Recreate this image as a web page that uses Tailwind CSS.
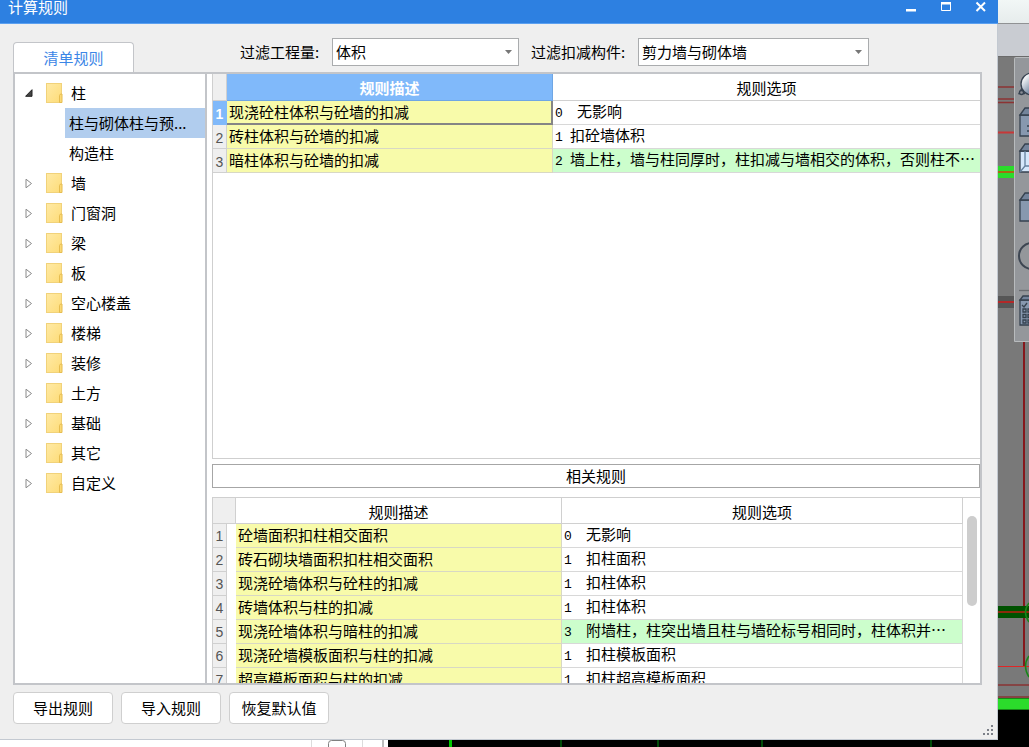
<!DOCTYPE html>
<html lang="zh-CN">
<head>
<meta charset="utf-8">
<meta name="viewport" content="width=device-width, initial-scale=1">
<title>计算规则</title>
<script src="https://cdn.jsdelivr.net/npm/@tailwindcss/browser@4"></script>
</head>
<body class="h-screen overflow-hidden grid grid-cols-[minmax(0,1fr)_31px] grid-rows-[minmax(0,1fr)_7px] bg-black text-[15px] leading-5 text-black font-['Noto_Sans_CJK_SC',sans-serif]">

<svg width="0" height="0" class="absolute" aria-hidden="true">
  <defs>
    <linearGradient id="fold" x1="0" y1="0" x2="1" y2="1"><stop offset="0" stop-color="#ffeaa6"/><stop offset="1" stop-color="#fddc78"/></linearGradient>
    <symbol id="folder" viewBox="0 0 17 21">
      <rect x="0.5" y="0.5" width="15" height="19" fill="url(#fold)" stroke="#f1d27a"/>
      <path d="M13.500 19.500v-7l1-1.500h1.500v8.500z" fill="#fbd976" stroke="#e6bd50"/>
    </symbol>
    <symbol id="closed" viewBox="0 0 8 11"><path d="M1 1.200v8.600l5.500-4.300z" fill="#fff" stroke="#8a8a8a" stroke-width="1"/></symbol>
    <symbol id="open" viewBox="0 0 8 8"><path d="M7 0.700v6.600h-6.400z" fill="#444" stroke="#222" stroke-width="1"/></symbol>
    <linearGradient id="ball" x1="0" y1="0" x2="1" y2="1"><stop offset="0.150" stop-color="#ffffff"/><stop offset="0.600" stop-color="#8496ad"/></linearGradient>
    <linearGradient id="ribbon" x1="0" y1="0" x2="0" y2="1"><stop offset="0" stop-color="#f2f7f6"/><stop offset="1" stop-color="#e6ecec"/></linearGradient>
  </defs>
</svg>

<!-- dialog window -->
<main class="flex flex-col min-h-0 bg-[#efefef] border-r border-b border-[#c3c9d1]">
  <header class="flex justify-between items-start h-6 shrink-0 -mr-px bg-[#2d80e1] border-b border-[#5ba0f0] text-white">
    <h1 class="pl-2 leading-[14px]">计算规则</h1>
    <div class="flex gap-[19px] pr-[7px]">
      <button aria-label="最小化" class="w-4 h-4"><svg viewBox="0 0 16 16" width="16" height="16"><rect x="1" y="9" width="10" height="2.500" fill="#fff"/></svg></button>
      <button aria-label="最大化" class="w-4 h-4"><svg viewBox="0 0 16 16" width="16" height="16"><path d="M1.500 3.500h9v7h-9z" fill="none" stroke="#fff"/><rect x="1" y="2" width="10" height="2.500" fill="#fff"/></svg></button>
      <button aria-label="关闭" class="w-4 h-4"><svg viewBox="0 0 16 16" width="16" height="16"><path d="M1.500 2.500l8.500 8.500M10 2.500L1.500 11" stroke="#fff" stroke-width="2"/></svg></button>
    </div>
  </header>

  <div class="flex h-12 shrink-0 pl-[13px]">
    <button class="self-end w-[121px] h-[30px] bg-white border border-b-0 border-[#c3c5c9] rounded-t-[4px] text-[#3c86e6] pt-px">清单规则</button>
    <div class="flex items-center h-7 mt-[14px] ml-[106px]">
      <label for="qty" class="w-[92px]">过滤工程量:</label>
      <span class="relative block w-[187px] h-7">
        <select id="qty" class="appearance-none w-full h-full pl-[3px] bg-white border border-[#aaacae]"><option>体积</option></select>
        <svg class="absolute right-[7px] top-3 pointer-events-none" width="7" height="4"><path d="M0 0h7L3.500 4z" fill="#777"/></svg>
      </span>
      <label for="part" class="w-[107px] ml-3">过滤扣减构件:</label>
      <span class="relative block w-[231px] h-7">
        <select id="part" class="appearance-none w-full h-full pl-[3px] bg-white border border-[#aaacae]"><option>剪力墙与砌体墙</option></select>
        <svg class="absolute right-[7px] top-3 pointer-events-none" width="7" height="4"><path d="M0 0h7L3.500 4z" fill="#777"/></svg>
      </span>
    </div>
  </div>

  <section class="flex flex-1 min-h-0 ml-[13px] mr-[15px] bg-white border-2 border-[#c3c5c9]">
    <nav class="w-[192px] shrink-0 border-r-2 border-[#c3c5c9] pt-1">
      <ul id="tree"></ul>
    </nav>
    <div class="flex flex-col flex-1 min-w-0 ml-[5px]">
      <div class="flex-[386_1_0] min-h-0 overflow-hidden border-l border-b border-[#cfcfcf]">
        <table class="w-full table-fixed border-separate border-spacing-0">
          <colgroup><col class="w-[14px]"><col class="w-[326px]"><col></colgroup>
          <thead><tr class="h-[27px]">
            <th class="bg-[#efefef] border-b border-r border-[#d0d0d0]"></th>
            <th class="p-0 pt-[2px] bg-[#80b9fa] border-b border-r border-[#6fa6e4] text-white font-bold">规则描述</th>
            <th class="p-0 pt-[2px] border-b border-[#d0d0d0] font-normal">规则选项</th>
          </tr></thead>
          <tbody id="rules"></tbody>
        </table>
      </div>
      <h2 class="h-6 shrink-0 mt-[5px] mb-[9px] border border-[#a6a6a6] text-center leading-[22px]">相关规则</h2>
      <div class="flex flex-[186_1_0] min-h-0 overflow-hidden border-l border-t border-[#cfcfcf]">
        <div class="flex-1 min-w-0 h-full overflow-hidden">
          <table class="w-full table-fixed border-separate border-spacing-0">
            <colgroup><col class="w-[14px]"><col class="w-[9px]"><col class="w-[326px]"><col></colgroup>
            <thead><tr class="h-[26px]">
              <th colspan="2" class="bg-[#efefef] border-b border-r border-[#d0d0d0]"></th>
              <th class="p-0 pt-[3px] border-b border-r border-[#d0d0d0] font-normal">规则描述</th>
              <th class="p-0 pt-[3px] border-b border-r border-[#d0d0d0] font-normal">规则选项</th>
            </tr></thead>
            <tbody id="related"></tbody>
          </table>
        </div>
        <div class="w-[17px] shrink-0 pl-1 pt-[18px]"><div class="w-[10px] h-[90px] rounded-full bg-[#cdcdcd]"></div></div>
      </div>
    </div>
  </section>

  <footer class="flex shrink-0 h-[54px] pl-[13px] pt-[7px] pr-1 gap-2">
    <button class="w-[100px] h-8 bg-white border border-[#cfcfcf] rounded-[4px]">导出规则</button>
    <button class="w-[100px] h-8 bg-white border border-[#cfcfcf] rounded-[4px]">导入规则</button>
    <button class="w-[100px] h-8 bg-white border border-[#cfcfcf] rounded-[4px]">恢复默认值</button>
    <svg class="ml-auto mb-1 self-end" width="10" height="10" fill="#7c8088"><path d="M8 0h2v2h-2zM8 4h2v2h-2zM4 4h2v2h-2zM8 8h2v2h-2zM4 8h2v2h-2zM0 8h2v2h-2z"/></svg>
  </footer>
</main>

<!-- drawing area and tool palette behind the dialog -->
<aside class="row-span-2 overflow-hidden" aria-label="绘图区">
  <svg width="31" height="747" viewBox="0 0 31 747">
    <rect width="31" height="23" fill="url(#ribbon)"/>
    <rect y="23" width="31" height="1" fill="#909294"/>
    <rect y="24" width="31" height="32" fill="#c9ccd2"/>
    <rect y="56" width="31" height="652" fill="#797979"/>
    <rect y="56" width="31" height="1" fill="#6b6b6b"/>
    <path d="M0 87h16M0 99h16M0 102.500h16" stroke="#8c3333" stroke-width="1.500"/>
    <path d="M0 132.500h16" stroke="#c83838" stroke-width="2"/>
    <rect y="166" width="16" height="12" fill="#2bdc2b"/><rect y="171" width="16" height="2" fill="#a86a10"/>
    <rect y="296" width="16" height="12" fill="#565656"/><rect y="301" width="16" height="2" fill="#b32828"/>
    <path d="M26 341v326" stroke="#86181c" stroke-width="2"/>
    <rect y="606" width="31" height="12" fill="#005200"/><rect y="611" width="31" height="2" fill="#8a2c0c"/>
    <path d="M0 666.500h31" stroke="#e02626"/>
    <path d="M0 685h31M0 697h31" stroke="#854444" stroke-width="2"/>
    <rect y="698" width="31" height="12" fill="#2bdc2b"/><path d="M0 698.500h31M0 709.500h31" stroke="#178817"/>
    <path d="M31 603q-7 9 0 19M31 656q-7 10 0 21" fill="none" stroke="#188718" stroke-width="1.500"/>
    <path d="M16.500 341.500v-283q0-1 1-1h14v284z" fill="#94979b" stroke="#b8bbbd"/>
    <g stroke="#364250" stroke-width="1.300" fill="#8798af">
      <path d="M24.500 87l-3.500 6.500h6" fill="#8a8f96"/>
      <circle cx="34" cy="84" r="11" fill="url(#ball)"/>
      <circle cx="23.500" cy="92.500" r="2" fill="#8a8f96"/>
      <path d="M22 115h12v21h-12z"/><path d="M22 115l5-7h8v7z" fill="#73849b"/><path d="M29 126h3M29 131h3"/>
      <path d="M22 151h12v21h-12z" fill="#d5e7fb"/><path d="M22 151l5-7h8v7z" fill="#73849b"/><path d="M27 151v15h6M27 166l-5 6" fill="none" stroke="#64809d"/>
      <path d="M22 200h12v21h-12z"/><path d="M22 200l5-7h8v7z" fill="#73849b"/>
      <circle cx="34" cy="256" r="13" fill="none" stroke="#3d4652" stroke-width="2"/>
      <path d="M21 290.500h10" stroke="#696c70"/>
      <path d="M22 300h12v25h-12z"/><path d="M22 300l3-4h9v4z" fill="#73849b"/>
      <path d="M24 305l2 2 3-4M25 309h3v3h-3zM25 314.500h3v3h-3zM25 320h3v3h-3zM30 309h2v3h-2zM30 314.500h2v3h-2zM30 320h2v3h-2z" fill="none"/>
    </g>
  </svg>
</aside>
<div class="overflow-hidden">
  <svg width="998" height="7" viewBox="0 0 998 7">
    <rect width="388" height="7" fill="#fff"/>
    <path d="M311.500 0v7M362.500 0v7" stroke="#dcdcdc"/><path d="M383 0v7" stroke="#bdbdbd" stroke-width="2"/>
    <rect x="328.500" y="0.500" width="17" height="15" rx="3" fill="#fff" stroke="#808080"/>
    <path d="M450.500 0v7" stroke="#00c800" stroke-width="3"/>
    <path d="M561 0v7M658 0v7M762 0v7M931 0v7" stroke="#004a08" stroke-width="2"/>
  </svg>
</div>

<script>
const tree = ['柱', '墙', '门窗洞', '梁', '板', '空心楼盖', '楼梯', '装修', '土方', '基础', '其它', '自定义'];
document.getElementById('tree').innerHTML = tree.map((name, i) => `
  <li>
    <div class="flex items-center h-[30px] pl-[10px]">
      <button aria-label="${i ? '展开' : '折叠'}" class="w-[21px] flex items-center">${i
        ? '<svg width="8" height="11"><use href="#closed"/></svg>'
        : '<svg width="8" height="8"><use href="#open"/></svg>'}</button>
      <svg width="17" height="21" class="mr-2"><use href="#folder"/></svg>
      <span>${name}</span>
    </div>${i ? '' : `
    <ul>
      <li class="ml-[50px] h-[30px] pl-1 leading-[30px] bg-[#b1cdee]">柱与砌体柱与预...</li>
      <li class="ml-[50px] h-[30px] pl-1 leading-[30px]">构造柱</li>
    </ul>`}
  </li>`).join('');

const num = (n, on) => `<th scope="row" class="p-0 h-6 border-b border-r text-sm leading-5 pt-[2px] font-['Liberation_Sans',sans-serif] ${on
  ? 'bg-[#80b9fa] border-[#80b9fa] text-white font-bold'
  : 'bg-[#efefef] border-[#d0d0d0] text-[#555] font-normal'}">${n}</th>`;
const code = (c, wide) => `<span class="inline-block text-[13px] font-['Liberation_Mono',monospace] ${wide ? 'w-[22px]' : 'w-[15px]'}">${c}</span>`;

const rules = [
  ['现浇砼柱体积与砼墙的扣减', 0, '无影响'],
  ['砖柱体积与砼墙的扣减', 1, '扣砼墙体积'],
  ['暗柱体积与砼墙的扣减', 2, '墙上柱，墙与柱同厚时，柱扣减与墙相交的体积，否则柱不…'],
];
document.getElementById('rules').innerHTML = rules.map(([d, c, t], i) => `
  <tr>${num(i + 1, i === 0)}
    <td class="p-0 pl-[2px] pb-px h-6 bg-[#f8fbaa] whitespace-nowrap ${i ? 'border-b border-r border-[#d8d8c4]' : 'border-b-2 border-r-2 border-[#858585]'}">${d}</td>
    <td class="p-0 pl-[2px] h-6 border-b border-[#d8d8d8] whitespace-nowrap overflow-hidden ${i === 2 ? 'bg-[#ccfecc]' : ''}">${code(c, i === 0)}${t}</td>
  </tr>`).join('');

const related = [
  ['砼墙面积扣柱相交面积', 0, '无影响'],
  ['砖石砌块墙面积扣柱相交面积', 1, '扣柱面积'],
  ['现浇砼墙体积与砼柱的扣减', 1, '扣柱体积'],
  ['砖墙体积与柱的扣减', 1, '扣柱体积'],
  ['现浇砼墙体积与暗柱的扣减', 3, '附墙柱，柱突出墙且柱与墙砼标号相同时，柱体积并…'],
  ['现浇砼墙模板面积与柱的扣减', 1, '扣柱模板面积'],
  ['超高模板面积与柱的扣减', 1, '扣柱超高模板面积'],
];
document.getElementById('related').innerHTML = related.map(([d, c, t], i) => `
  <tr>${num(i + 1, false)}
    <td class="p-0"></td>
    <td class="p-0 pl-[2px] pb-px h-6 bg-[#f8fbaa] border-b border-r border-[#d8d8c4] whitespace-nowrap">${d}</td>
    <td class="p-0 pl-[2px] h-6 border-b border-r border-[#d8d8d8] whitespace-nowrap overflow-hidden ${i === 4 ? 'bg-[#ccfecc]' : ''}">${code(c, true)}${t}</td>
  </tr>`).join('');
</script>
</body>
</html>
